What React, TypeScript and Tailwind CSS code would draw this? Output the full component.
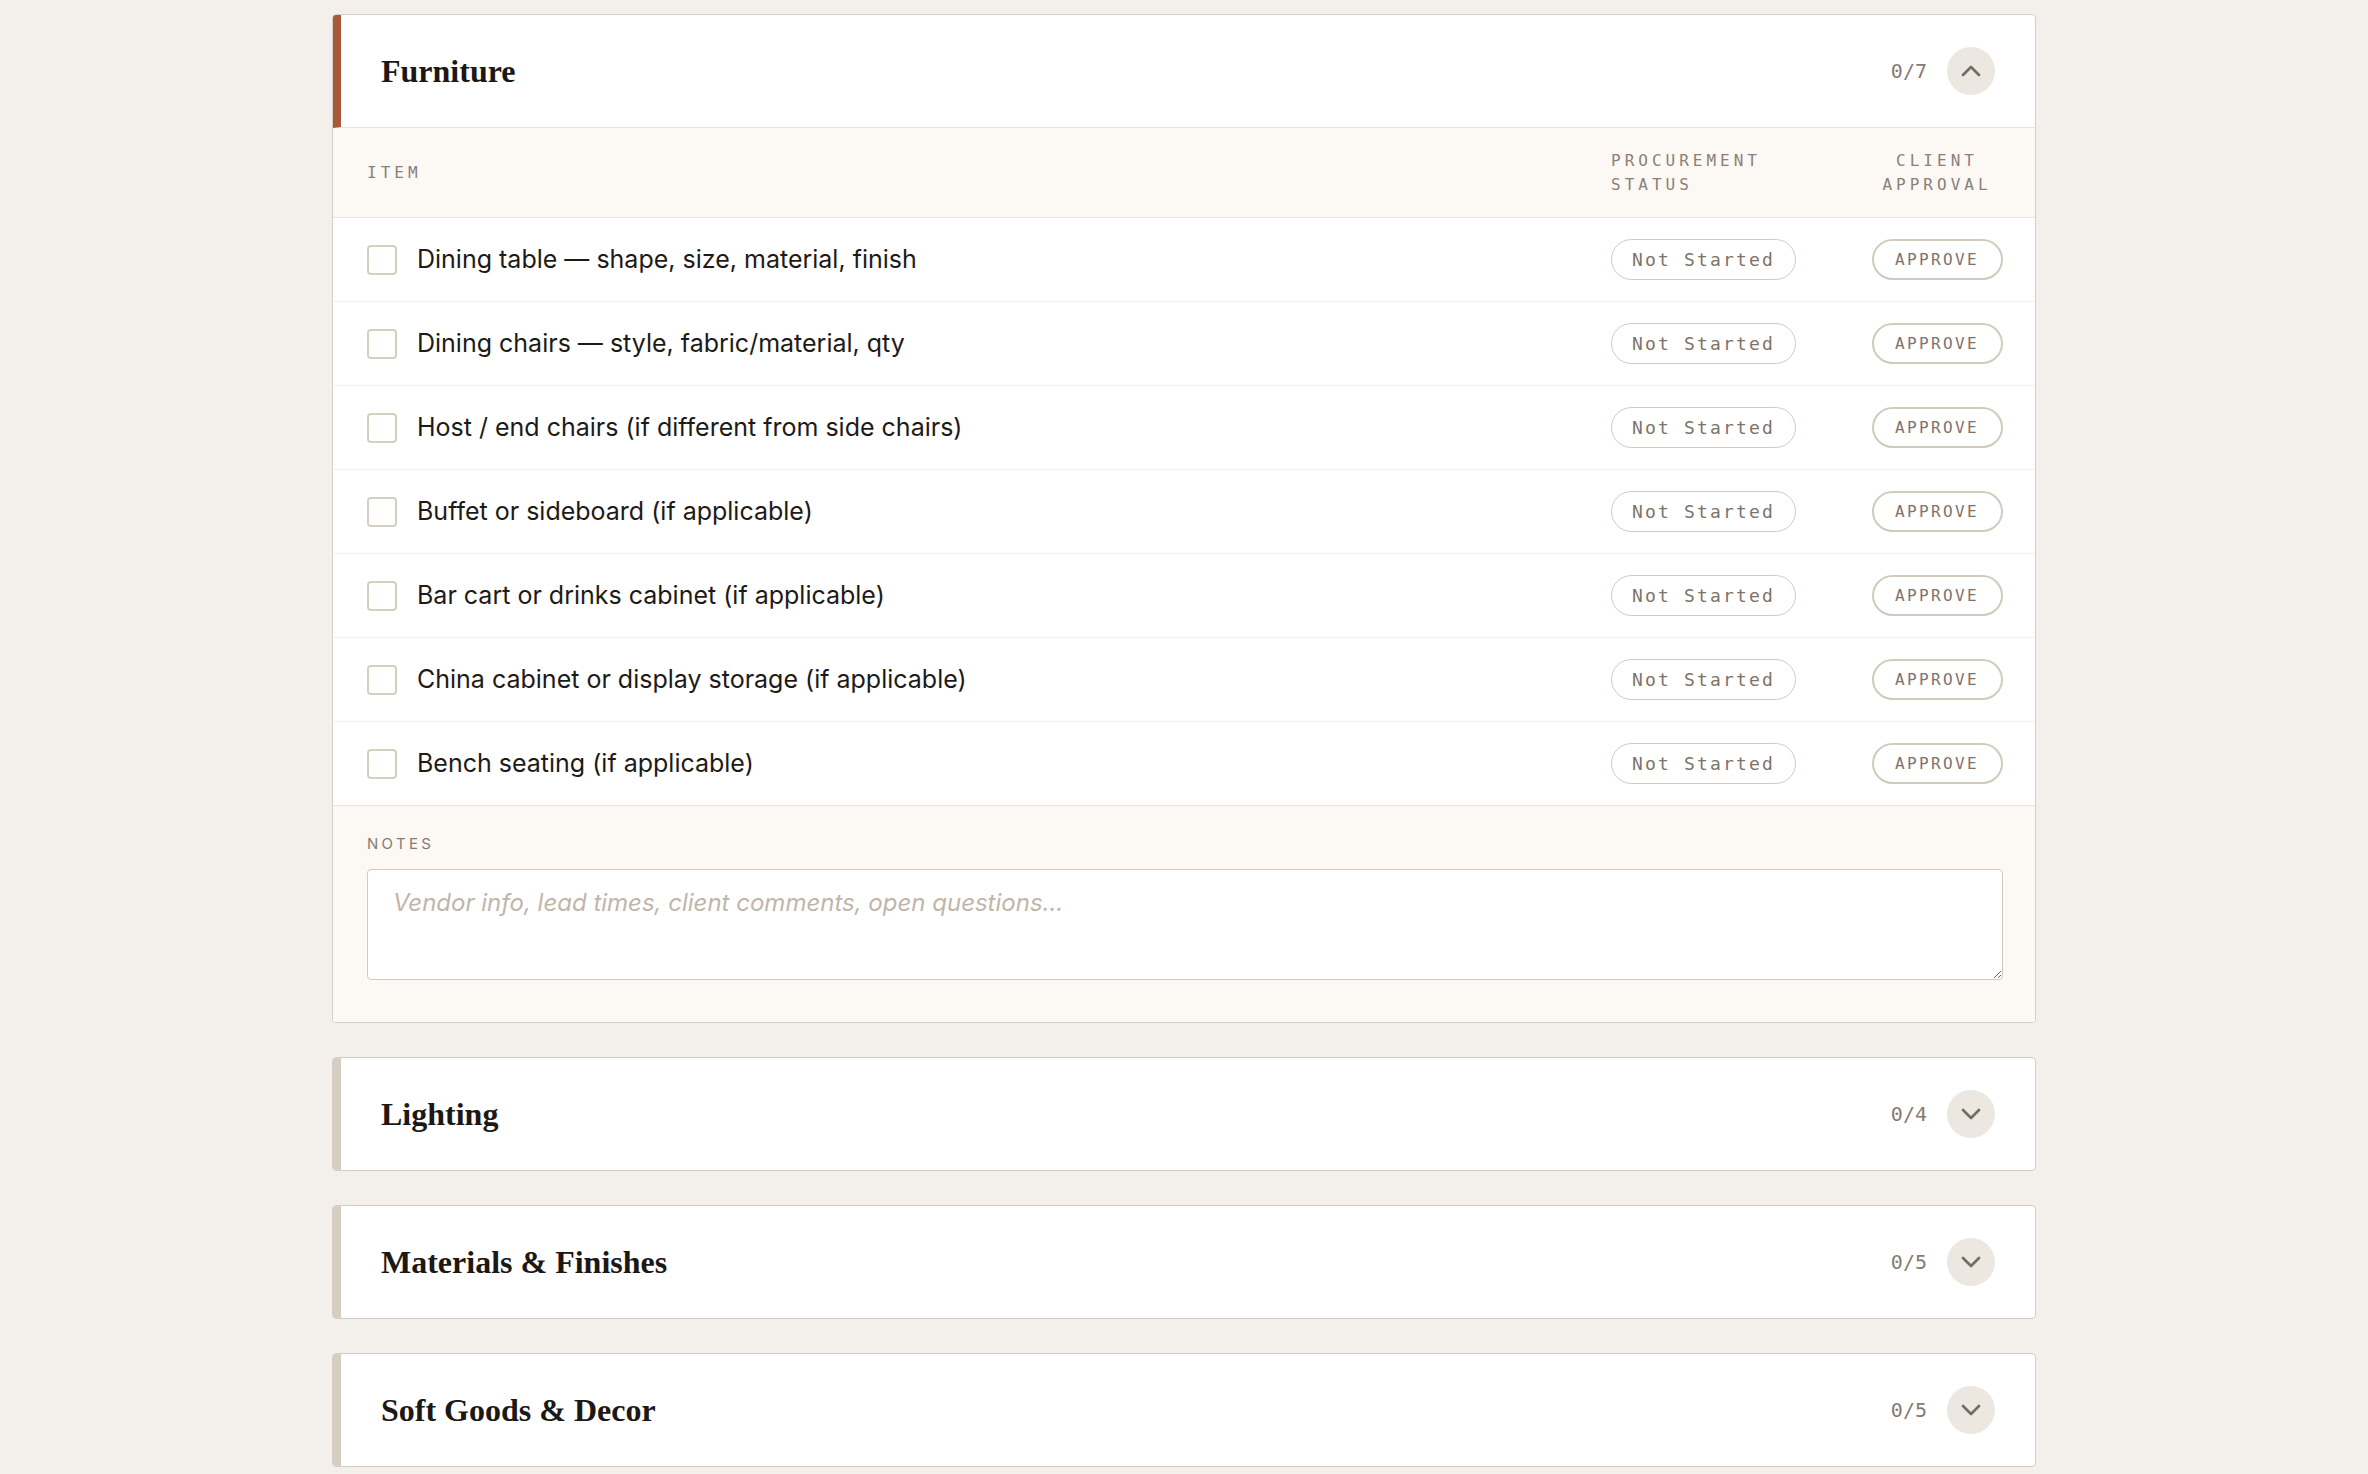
import { ChevronDown, ChevronUp } from "lucide-react";

const furnitureItems = [
  "Dining table — shape, size, material, finish",
  "Dining chairs — style, fabric/material, qty",
  "Host / end chairs (if different from side chairs)",
  "Buffet or sideboard (if applicable)",
  "Bar cart or drinks cabinet (if applicable)",
  "China cabinet or display storage (if applicable)",
  "Bench seating (if applicable)",
];

const otherSections = [
  { name: "Lighting", total: 4 },
  { name: "Materials & Finishes", total: 5 },
  { name: "Soft Goods & Decor", total: 5 },
];

const mono = "font-['DejaVu_Sans_Mono',monospace]";
const sans = "font-['Inter',sans-serif]";

const SectionHeader = ({
  name,
  done,
  total,
  open,
}: {
  name: string;
  done: number;
  total: number;
  open: boolean;
}) => (
  <div
    className={`flex items-center justify-between border-l-[8px] py-8 pl-10 pr-10 ${
      open ? "border-l-[#a9583a] border-b border-b-[#ebe5dc]" : "border-l-[#d6cec2]"
    }`}
  >
    <h2 className="font-['Liberation_Serif',serif] text-[32px] font-bold leading-none text-[#1c1815]">
      {name}
    </h2>
    <div className="flex items-center gap-5">
      <span className={`${mono} text-[20px] text-[#857b72]`}>
        {done}/{total}
      </span>
      <button className="flex h-12 w-12 items-center justify-center rounded-full bg-[#ece7e0] text-[#766c64]">
        {open ? (
          <ChevronUp size={32} strokeWidth={2} />
        ) : (
          <ChevronDown size={32} strokeWidth={2} />
        )}
      </button>
    </div>
  </div>
);

const App = () => {
  return (
    <div className={`min-h-screen bg-[#f3f0eb] pt-[14px] pb-10 ${sans}`}>
      <div className="mx-auto flex w-[1704px] flex-col gap-[34px]">
        {/* open section */}
        <section className="overflow-hidden rounded-[4px] border border-[#d6cec2] bg-white">
          <SectionHeader name="Furniture" done={0} total={7} open />

          <div className="grid h-[90px] grid-cols-[1fr_220px_132px] items-center gap-x-10 border-b border-[#ebe5dc] bg-[#fcf9f5] pl-[34px] pr-8">
            <span className={`${mono} text-[16px] leading-6 tracking-[0.25em] text-[#8a8078]`}>ITEM</span>
            <span className={`${mono} text-[16px] leading-6 tracking-[0.25em] text-[#8a8078]`}>
              PROCUREMENT STATUS
            </span>
            <span className={`${mono} text-center text-[16px] leading-6 tracking-[0.25em] text-[#8a8078]`}>
              CLIENT APPROVAL
            </span>
          </div>

          {furnitureItems.map((item, i) => (
            <div
              key={item}
              className={`grid h-[84px] grid-cols-[1fr_220px_132px] items-center gap-x-10 border-b pl-[34px] pr-8 ${
                i === furnitureItems.length - 1 ? "border-[#ebe5dc]" : "border-[#f4efe9]"
              }`}
            >
              <label className="flex items-center gap-5">
                <span className="h-[30px] w-[30px] shrink-0 rounded-[4px] border-2 border-[#d6cec2] bg-white" />
                <span className="text-[25px] text-[#1e1a17]">{item}</span>
              </label>
              <div>
                <span
                  className={`inline-flex h-[41px] items-center rounded-full border-[1.5px] border-[#d3cabe] px-5 ${mono} text-[18px] tracking-[0.12em] text-[#7d736b]`}
                >
                  Not Started
                </span>
              </div>
              <button
                className={`flex h-[41px] w-[131px] items-center justify-center justify-self-center rounded-full border-2 border-[#d3cabe] ${mono} text-[16px] tracking-[0.15em] text-[#7d736b]`}
              >
                APPROVE
              </button>
            </div>
          ))}

          <div className="bg-[#fcf9f5] pb-[42px] pl-[34px] pr-8 pt-7">
            <p className="mb-[15px] text-[15px] leading-5 tracking-[0.22em] text-[#857b72]">NOTES</p>
            <textarea
              className={`block h-[111px] w-full rounded-[4px] border-[1.5px] border-[#d3cabe] bg-white px-[25px] pt-[15px] ${sans} text-[24px] italic text-[#221d19] outline-none placeholder:text-[#bfb6ab]`}
              placeholder="Vendor info, lead times, client comments, open questions..."
            />
          </div>
        </section>

        {otherSections.map((s) => (
          <section key={s.name} className="overflow-hidden rounded-[4px] border border-[#d6cec2] bg-white">
            <SectionHeader name={s.name} done={0} total={s.total} open={false} />
          </section>
        ))}
      </div>
    </div>
  );
};

export default App;
